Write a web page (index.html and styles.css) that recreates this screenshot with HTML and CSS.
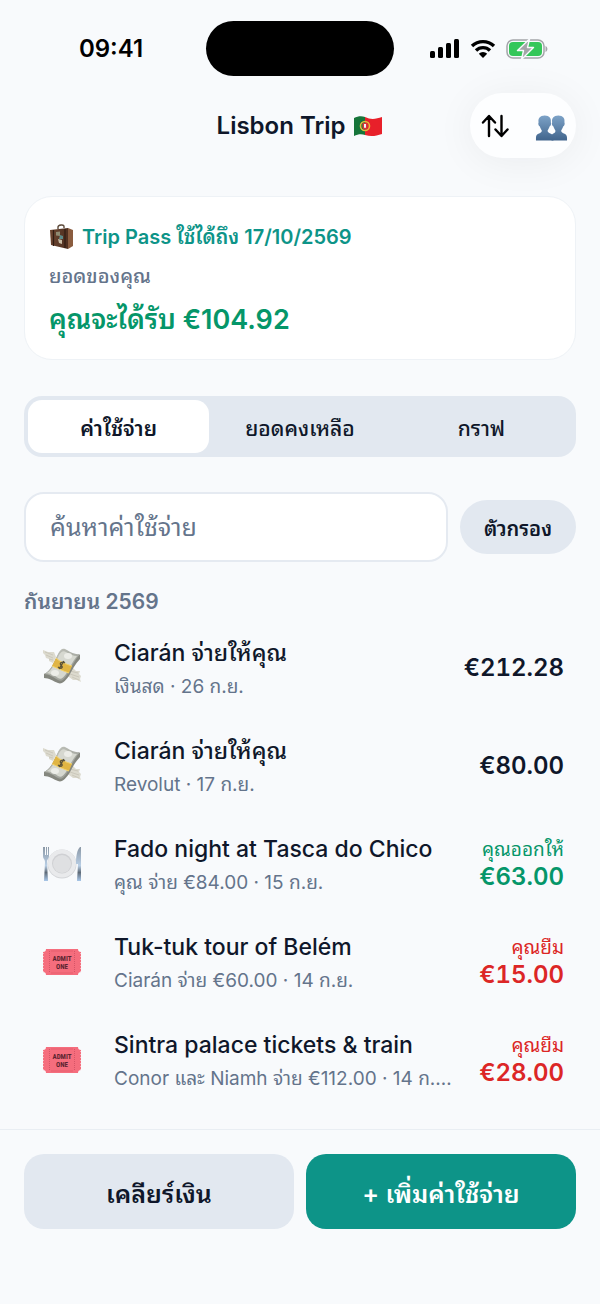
FILE: index.html
```
<!DOCTYPE html>
<html lang="th">
<head>
  <meta charset="UTF-8">
  <title>Lisbon Trip</title>
  <meta name="viewport" content="width=device-width, initial-scale=1.0">
  <meta name="theme-color" content="#f8fafc">
  <link rel="stylesheet" href="styles.css">
</head>
<body>
  <!-- shared icons -->
  <svg class="sprite" aria-hidden="true">
    <defs>
      <linearGradient id="people" x1="0" y1="0" x2="0" y2="1">
        <stop offset="0" stop-color="#7da3c8"/>
        <stop offset="1" stop-color="#41648c"/>
      </linearGradient>
      <linearGradient id="note" x1="0" y1="0" x2="1" y2="1">
        <stop offset="0" stop-color="#c9cbc3"/>
        <stop offset="1" stop-color="#8f928b"/>
      </linearGradient>
      <linearGradient id="steel" x1="0" y1="0" x2="0" y2="1">
        <stop offset="0" stop-color="#8b98a6"/>
        <stop offset="0.55" stop-color="#b9cfe6"/>
        <stop offset="0.75" stop-color="#5f6b78"/>
        <stop offset="1" stop-color="#a9c8ea"/>
      </linearGradient>
      <linearGradient id="leather" x1="0" y1="0" x2="1" y2="0">
        <stop offset="0" stop-color="#6b4530"/>
        <stop offset="1" stop-color="#4f2f20"/>
      </linearGradient>
    </defs>
    <symbol id="icon-money" viewBox="0 2 40 40">
      <path d="M1 4 6 6 12 6 14 11 11 17 7 15 7 13 4 12 3 9 1 7Z" fill="#dcdace"/>
      <path d="M3 6 11 9M4 9 11 12M7 13 11 14" stroke="#c6c3b6" stroke-width="0.8"/>
      <path d="M25 22 30 21 34 25 38 25 37 28 39 30 38 33 39 36 35 34 31 34 27 31Z" fill="#dcdace"/>
      <path d="M28 25 36 27M28 28 37 31M30 31 37 34" stroke="#c6c3b6" stroke-width="0.8"/>
      <path d="M2 28C9 25 11 18 16 9 18 5 20 3 23 4 27 6 32 10 38 9V13C33 18 30 24 27 30 24 34 20 39 16 37 11 35 7 32 2 32Z" fill="#85877f"/>
      <path d="M2 28C9 25 11 18 16 8 18 4 20 2 23 3 27 5 32 9 38 8 32 15 29 22 25 29 22 34 19 36 16 34 11 31 7 28 2 28Z" fill="url(#note)"/>
      <path d="M5 27C10 24 13 18 17 9 19 6 21 4 24 6 28 8 31 10 35 10 30 16 27 23 24 28 21 32 19 34 16 32 12 29 9 28 5 27Z" fill="#d6d8d0"/>
      <ellipse cx="26" cy="10" rx="4" ry="3" fill="#ecede8"/>
      <ellipse cx="13" cy="27" rx="4" ry="3" fill="#ecede8"/>
      <path d="M14 12C18 16 24 18 30 20L27 27C21 25 15 22 10 20Z" fill="#e0b544"/>
      <path d="M14 12C18 16 24 18 30 20M10 20C15 22 21 25 27 27" stroke="#f3d36b" fill="none"/>
      <path d="M23 17C20 15 17 17 19 19 21 21 20 24 16 21M22 15 17 23" stroke="#5a523a" stroke-width="1.4" fill="none"/>
    </symbol>
    <symbol id="icon-plate" viewBox="0 0 40 40">
      <circle cx="20" cy="20" r="14.5" fill="#d3d5d8"/>
      <circle cx="20" cy="19.5" r="14" fill="#e9eaec"/>
      <circle cx="20" cy="19.5" r="10" fill="#cfd0d3"/>
      <circle cx="20" cy="20" r="9" fill="#dfe0e2"/>
      <path d="M1 3V12C1 15 3 15 3 18L2 37H6L5 18C5 15 7 15 7 12V3H6V11H5V3H4V11H3V3Z" fill="url(#steel)"/>
      <path d="M38 3C35 6 34 12 34 20H36L35 37H39V3Z" fill="url(#steel)"/>
    </symbol>
  </svg>

  <div class="status-bar">
    <div class="time">09:41</div>
    <div class="island"></div>
    <div class="status-icons">
      <svg width="30" height="20" viewBox="0 0 30 20" aria-hidden="true">
        <rect x="0" y="12" width="5" height="7" rx="1.5"/>
        <rect x="8" y="8" width="5" height="11" rx="1.5"/>
        <rect x="16" y="4" width="5" height="15" rx="1.5"/>
        <rect x="24" y="0" width="5" height="19" rx="1.5"/>
      </svg>
      <svg width="26" height="20" viewBox="0 0 26 20" aria-hidden="true">
        <path d="M2 7A16 16 0 0 1 24 7M6 11.5A10 10 0 0 1 20 11.5" fill="none" stroke="#000" stroke-width="3.4"/>
        <path d="M13 19 8.8 14.8A6 6 0 0 1 17.2 14.8Z"/>
      </svg>
      <svg width="42" height="22" viewBox="0 0 42 22" aria-hidden="true">
        <rect x="1" y="2" width="37" height="18" rx="6" fill="none" stroke="#a3a5a8" stroke-width="1.5"/>
        <path d="M39.5 8C42 9 42 13 39.5 14Z" fill="#a3a5a8"/>
        <rect x="3" y="4" width="33" height="14" rx="4" fill="#34c759"/>
        <path d="M23.5 1 11.5 12.5H17.5L15.5 21.5 27.5 9.5H21.5Z" fill="#a3a5a8" stroke="#f8fafc" stroke-width="1.4" stroke-linejoin="round"/>
      </svg>
    </div>
  </div>

  <header class="nav">
    <h1>Lisbon Trip
      <svg class="flag" width="30" height="24" viewBox="0 0 30 24" role="img" aria-label="Portugal">
        <path d="M1 4C5 2 9 2 12 3V21C9 20 5 20 1 22Z" fill="#16753a"/>
        <path d="M12 3C18 6 23 5 29 3V20C23 22 18 23 12 21Z" fill="#e8202a"/>
        <circle cx="12" cy="12" r="4.5" fill="none" stroke="#e3b93a" stroke-width="1.6"/>
        <path d="M9.5 9H14.5V13A2.5 2.5 0 0 1 9.5 13Z" fill="#d9343a"/>
        <path d="M11 10H13V13A1 1 0 0 1 11 13Z" fill="#f4f4f4"/>
      </svg>
    </h1>
    <div class="nav-actions">
      <button type="button" aria-label="เรียงลำดับ">
        <svg width="28" height="24" viewBox="0 0 28 24" fill="none" stroke="#000" stroke-width="2.4" stroke-linecap="round" stroke-linejoin="round" aria-hidden="true">
          <path d="M8 22V2.5M2 8.5 8 2 14 8.5M20.5 2V21.5M14.5 15.5 20.5 22 26.5 15.5"/>
        </svg>
      </button>
      <button type="button" aria-label="สมาชิก">
        <svg width="33" height="28" viewBox="0 0 34 28" fill="url(#people)" aria-hidden="true">
          <path d="M10 1C5 1 3 4 3.7 8 3 9 3.5 12 5 12.5 5.5 14.5 6.5 15.5 7 16.5 7.5 20 1 18.5 1 24V27H19V24C19 18.5 12.5 20 13 16.5 13.5 15.5 14.5 14.5 15 12.5 16.5 12 17 9 16.3 8 17 4 15 1 10 1Z"/>
          <path d="M24 1C19 1 17 4 17.7 8 17 9 17.5 12 19 12.5 19.5 14.5 20.5 15.5 21 16.5 21.5 20 18 18.5 17 22V27H33V24C33 18.5 26.5 20 27 16.5 27.5 15.5 28.5 14.5 29 12.5 30.5 12 31 9 30.3 8 31 4 29 1 24 1Z"/>
        </svg>
      </button>
    </div>
  </header>

  <main>
    <section class="card">
      <div class="pass">
        <svg width="26" height="26" viewBox="0 0 26 26" aria-hidden="true">
          <path d="M9 5V3C9 1 15 0 15 2.5V4" fill="none" stroke="#5d4a3a" stroke-width="1.4"/>
          <path d="M1 6 19 4V25L2 21Z" fill="url(#leather)"/>
          <path d="M19 4 24 6V22L19 25Z" fill="#8a5c3f"/>
          <path d="M4.5 6V22M16 5V24" stroke="#2f1c13" stroke-width="1.2"/>
          <path d="M7 8 11 7.5V12L7 11.5Z" fill="#8f8a72"/>
          <path d="M11 11 14 12V15H10Z" fill="#5c8a88"/>
          <path d="M9 15 13 16V20L10 19Z" fill="#c9bda6"/>
        </svg>
        <span>Trip Pass ใช้ได้ถึง 17/10/2569</span>
      </div>
      <div class="balance-label">ยอดของคุณ</div>
      <div class="balance">คุณจะได้รับ €104.92</div>
    </section>

    <div class="tabs" role="tablist">
      <button type="button" role="tab" class="active" aria-selected="true">ค่าใช้จ่าย</button>
      <button type="button" role="tab" aria-selected="false">ยอดคงเหลือ</button>
      <button type="button" role="tab" aria-selected="false">กราฟ</button>
    </div>

    <div class="search">
      <input type="text" id="search" aria-label="ค้นหาค่าใช้จ่าย" placeholder="ค้นหาค่าใช้จ่าย">
      <button type="button">ตัวกรอง</button>
    </div>

    <h2>กันยายน 2569</h2>
    <ul class="list">
      <li>
        <svg class="icon" aria-hidden="true"><use href="#icon-money"/></svg>
        <div class="info">
          <div class="title">Ciarán จ่ายให้คุณ</div>
          <div class="meta">เงินสด · 26 ก.ย.</div>
        </div>
        <div class="amount"><strong>€212.28</strong></div>
      </li>
      <li>
        <svg class="icon" aria-hidden="true"><use href="#icon-money"/></svg>
        <div class="info">
          <div class="title">Ciarán จ่ายให้คุณ</div>
          <div class="meta">Revolut · 17 ก.ย.</div>
        </div>
        <div class="amount"><strong>€80.00</strong></div>
      </li>
      <li>
        <svg class="icon" aria-hidden="true"><use href="#icon-plate"/></svg>
        <div class="info">
          <div class="title">Fado night at Tasca do Chico</div>
          <div class="meta">คุณ จ่าย €84.00 · 15 ก.ย.</div>
        </div>
        <div class="amount lent"><span>คุณออกให้</span><strong>€63.00</strong></div>
      </li>
      <li>
        <svg class="icon" viewBox="0 0 40 40" aria-hidden="true">
          <path d="M4 7H36A3 3 0 0 0 39 10V30A3 3 0 0 0 36 33H4A3 3 0 0 0 1 30V10A3 3 0 0 0 4 7Z" fill="#f56d7d"/>
          <path d="M1 11V30M39 11V30" stroke="#f8fafc" stroke-dasharray="1 2"/>
          <path d="M7.5 9V31M32.5 9V31" stroke="#c94b5d" stroke-width="0.7" stroke-dasharray="1 1"/>
          <path d="M9 31H31M9 9H31" stroke="#e25669" stroke-width="0.7"/>
          <text class="ticket-text" x="20" y="19">ADMIT</text>
          <text class="ticket-text" x="20" y="27">ONE</text>
        </svg>
        <div class="info">
          <div class="title">Tuk-tuk tour of Belém</div>
          <div class="meta">Ciarán จ่าย €60.00 · 14 ก.ย.</div>
        </div>
        <div class="amount owed"><span>คุณยืม</span><strong>€15.00</strong></div>
      </li>
      <li>
        <svg class="icon" viewBox="0 0 40 40" aria-hidden="true">
          <path d="M4 7H36A3 3 0 0 0 39 10V30A3 3 0 0 0 36 33H4A3 3 0 0 0 1 30V10A3 3 0 0 0 4 7Z" fill="#f56d7d"/>
          <path d="M1 11V30M39 11V30" stroke="#f8fafc" stroke-dasharray="1 2"/>
          <path d="M7.5 9V31M32.5 9V31" stroke="#c94b5d" stroke-width="0.7" stroke-dasharray="1 1"/>
          <path d="M9 31H31M9 9H31" stroke="#e25669" stroke-width="0.7"/>
          <text class="ticket-text" x="20" y="19">ADMIT</text>
          <text class="ticket-text" x="20" y="27">ONE</text>
        </svg>
        <div class="info">
          <div class="title">Sintra palace tickets &amp; train</div>
          <div class="meta">Conor และ Niamh จ่าย €112.00 · 14 ก.…</div>
        </div>
        <div class="amount owed"><span>คุณยืม</span><strong>€28.00</strong></div>
      </li>
    </ul>
  </main>

  <footer class="actions">
    <button type="button">เคลียร์เงิน</button>
    <button type="button" class="primary">+ เพิ่มค่าใช้จ่าย</button>
  </footer>
</body>
</html>
```

FILE: styles.css
```
* {
  box-sizing: border-box;
}

body {
  margin: 0;
  min-height: 100vh;
  display: flex;
  flex-direction: column;
  background-color: #f8fafc;
  color: #0f172a;
  font-family: Inter, "Noto Sans Thai Looped", "Noto Sans Thai", "Noto Sans", sans-serif;
  font-size: 20px;
  line-height: 28px;
}

button, input {
  font-family: inherit;
  color: inherit;
  border: none;
}

button {
  padding: 0;
  cursor: pointer;
  background: none;
}

svg {
  display: block;
  flex-shrink: 0;
}

.sprite {
  position: absolute;
  width: 0;
  height: 0;
}

/* Status bar */
.status-bar {
  display: grid;
  grid-template-columns: 1fr auto 1fr;
  align-items: center;
  padding: 21px 24px 0;
}

.time {
  padding-right: 8px;
  color: #000;
  font-size: 24px;
  font-weight: 600;
  text-align: center;
}

.island {
  width: 188px;
  height: 55px;
  border-radius: 28px;
  background-color: #000;
}

.status-icons {
  display: flex;
  justify-content: center;
  align-items: center;
  gap: 10px;
  padding-left: 8px;
}

/* Header */
.nav {
  display: grid;
  grid-template-columns: 1fr auto 1fr;
  align-items: center;
  padding: 17px 24px 0;
}

.nav h1 {
  grid-column: 2;
  display: flex;
  align-items: center;
  gap: 8px;
  margin: 0;
  font-size: 24px;
  font-weight: 600;
}

.nav-actions {
  justify-self: end;
  display: flex;
  align-items: center;
  width: 106px;
  height: 65px;
  border-radius: 33px;
  background-color: #fdfeff;
  box-shadow: 0 4px 40px rgba(15, 23, 42, 0.06);
}

.nav-actions button {
  flex: 1;
  height: 100%;
  display: flex;
  align-items: center;
  justify-content: center;
}

.nav-actions button:first-child {
  padding-right: 8px;
}

.nav-actions button:last-child {
  padding-top: 4px;
}

main {
  flex: 1;
  padding: 38px 24px 20px;
}

/* Balance card */
.card {
  padding: 26px 24px 21px;
  border: 1px solid #eef2f6;
  border-radius: 28px;
  background-color: #fff;
}

.pass {
  display: flex;
  align-items: center;
  gap: 7px;
  color: #0d9488;
  font-weight: 600;
}

.balance-label {
  margin-top: 11px;
  color: #64748b;
  font-weight: 500;
}

.balance {
  margin-top: 12px;
  color: #059669;
  font-size: 27px;
  font-weight: 600;
  line-height: 36px;
}

/* Tabs */
.tabs {
  display: flex;
  height: 61px;
  margin-top: 36px;
  padding: 4px;
  border-radius: 18px;
  background-color: #e2e8f0;
}

.tabs button {
  flex: 1;
  border-radius: 14px;
  font-size: 21px;
  font-weight: 500;
}

.tabs .active {
  background-color: #fff;
  font-weight: 600;
}

/* Search */
.search {
  display: flex;
  align-items: center;
  gap: 12px;
  margin-top: 35px;
}

.search input {
  flex: 1;
  min-width: 0;
  height: 70px;
  padding: 0 24px;
  border: 2px solid #e5eaf1;
  border-radius: 20px;
  background-color: #fff;
  font-size: 25px;
}

.search input::placeholder {
  color: #64748b;
  opacity: 1;
}

.search button {
  height: 54px;
  padding: 0 24px;
  border-radius: 27px;
  background-color: #e2e8f0;
  font-size: 20px;
  font-weight: 600;
}

h2 {
  margin: 26px 0 0;
  color: #64748b;
  font-size: 21px;
  font-weight: 600;
  line-height: 28px;
}

/* Expenses */
.list {
  margin: 3px 0 0;
  padding: 0;
  list-style: none;
}

.list li {
  display: flex;
  align-items: center;
  gap: 24px;
  height: 98px;
  padding: 0 12px 0 18px;
}

.icon {
  width: 40px;
  height: 40px;
  margin-right: 8px;
}

.info {
  flex: 1;
  min-width: 0;
}

.title, .meta {
  overflow: hidden;
  text-overflow: ellipsis;
  white-space: nowrap;
}

.title {
  font-size: 23px;
  font-weight: 500;
  line-height: 36px;
}

.meta {
  margin-top: 2px;
  color: #64748b;
  font-size: 19px;
}

.amount {
  display: flex;
  flex-direction: column;
  align-items: flex-end;
}

.amount strong {
  font-size: 24px;
  font-weight: 600;
  font-variant-numeric: tabular-nums;
}

.amount span {
  font-size: 19px;
  line-height: 26px;
}

.lent {
  color: #059669;
}

.owed {
  color: #dc2626;
}

.ticket-text {
  fill: #5b2430;
  font-family: "Roboto Condensed", "Liberation Sans Narrow", "Liberation Sans", sans-serif;
  font-size: 7px;
  font-weight: bold;
  text-anchor: middle;
}

/* Bottom buttons */
.actions {
  display: flex;
  gap: 12px;
  padding: 24px 24px 75px;
  border-top: 1px solid #e9eef3;
}

.actions button {
  flex: 1;
  height: 75px;
  border-radius: 20px;
  background-color: #e2e8f0;
  font-size: 25px;
  font-weight: 600;
}

.actions .primary {
  background-color: #0d9488;
  color: #fff;
}
```
